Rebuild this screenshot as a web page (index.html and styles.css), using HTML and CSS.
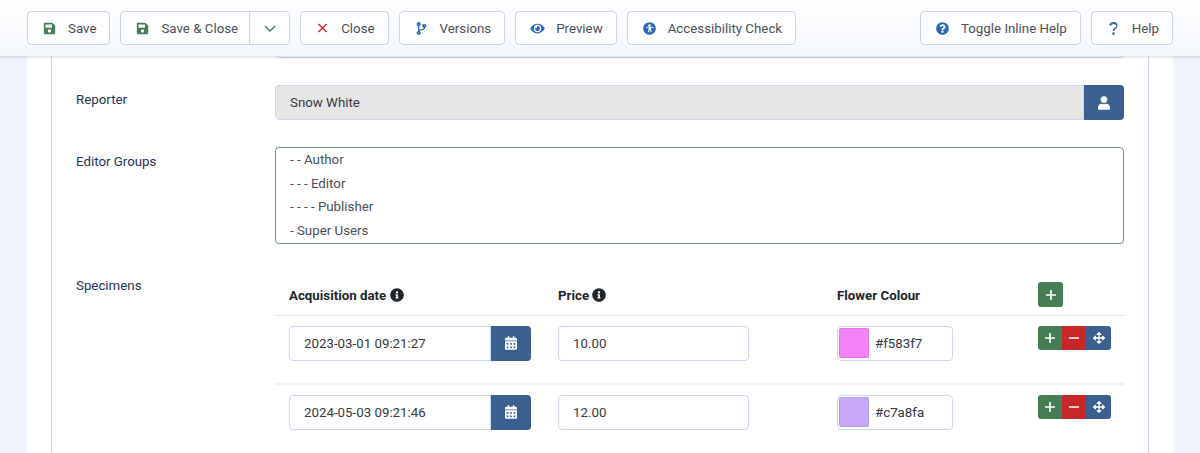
FILE: index.html
```html
<!DOCTYPE html>
<html lang="en">
<head>
    <meta charset="UTF-8" />
    <title>Edit Flower</title>
    <link rel="stylesheet" href="styles.css">
</head>
<body>

    <svg class="icon-defs" aria-hidden="true">
        <symbol id="i-save" viewBox="0 0 448 512"><path d="M433.941 129.941l-83.882-83.882A48 48 0 0 0 316.118 32H48C21.49 32 0 53.49 0 80v352c0 26.51 21.49 48 48 48h352c26.51 0 48-21.49 48-48V163.882a48 48 0 0 0-14.059-33.941zM224 416c-35.346 0-64-28.654-64-64 0-35.346 28.654-64 64-64s64 28.654 64 64c0 35.346-28.654 64-64 64zm96-304.52V212c0 6.627-5.373 12-12 12H76c-6.627 0-12-5.373-12-12V108c0-6.627 5.373-12 12-12h228.52c3.183 0 6.235 1.264 8.485 3.515l3.48 3.48A11.996 11.996 0 0 1 320 111.48z"/></symbol>
        <symbol id="i-user" viewBox="0 0 448 512"><path d="M224 256c70.7 0 128-57.3 128-128S294.7 0 224 0 96 57.3 96 128s57.3 128 128 128zm89.6 32h-16.7c-22.2 10.2-46.9 16-72.9 16s-50.6-5.8-72.9-16h-16.7C60.2 288 0 348.2 0 422.4V464c0 26.5 21.5 48 48 48h352c26.5 0 48-21.5 48-48v-41.6c0-74.2-60.2-134.4-134.4-134.4z"/></symbol>
        <symbol id="i-calendar" viewBox="0 0 448 512"><path d="M0 464c0 26.5 21.5 48 48 48h352c26.5 0 48-21.5 48-48V192H0v272zm320-196c0-6.6 5.4-12 12-12h40c6.6 0 12 5.4 12 12v40c0 6.6-5.4 12-12 12h-40c-6.6 0-12-5.4-12-12v-40zm0 128c0-6.6 5.4-12 12-12h40c6.6 0 12 5.4 12 12v40c0 6.6-5.4 12-12 12h-40c-6.6 0-12-5.4-12-12v-40zM192 268c0-6.6 5.4-12 12-12h40c6.6 0 12 5.4 12 12v40c0 6.6-5.4 12-12 12h-40c-6.6 0-12-5.4-12-12v-40zm0 128c0-6.6 5.4-12 12-12h40c6.6 0 12 5.4 12 12v40c0 6.6-5.4 12-12 12h-40c-6.6 0-12-5.4-12-12v-40zM64 268c0-6.6 5.4-12 12-12h40c6.6 0 12 5.4 12 12v40c0 6.6-5.4 12-12 12H76c-6.6 0-12-5.4-12-12v-40zm0 128c0-6.6 5.4-12 12-12h40c6.6 0 12 5.4 12 12v40c0 6.6-5.4 12-12 12H76c-6.6 0-12-5.4-12-12v-40zM400 64h-48V16c0-8.8-7.2-16-16-16h-32c-8.8 0-16 7.2-16 16v48H160V16c0-8.8-7.2-16-16-16h-32c-8.8 0-16 7.2-16 16v48H48C21.5 64 0 85.5 0 112v48h448v-48c0-26.5-21.5-48-48-48z"/></symbol>
        <symbol id="i-info" viewBox="0 0 512 512"><path d="M256 8C119.043 8 8 119.083 8 256c0 136.997 111.043 248 248 248s248-111.003 248-248C504 119.083 392.957 8 256 8zm0 110c23.196 0 42 18.804 42 42s-18.804 42-42 42-42-18.804-42-42 18.804-42 42-42zm56 254c0 6.627-5.373 12-12 12h-88c-6.627 0-12-5.373-12-12v-24c0-6.627 5.373-12 12-12h12v-64h-12c-6.627 0-12-5.373-12-12v-24c0-6.627 5.373-12 12-12h64c6.627 0 12 5.373 12 12v100h12c6.627 0 12 5.373 12 12v24z"/></symbol>
        <symbol id="i-help-circle" viewBox="0 0 512 512"><path d="M504 256c0 136.997-111.043 248-248 248S8 392.997 8 256C8 119.083 119.043 8 256 8s248 111.083 248 248zM262.655 90c-54.497 0-89.255 22.957-116.549 63.758-3.536 5.286-2.353 12.415 2.715 16.258l34.699 26.31c5.205 3.947 12.621 3.008 16.665-2.122 17.864-22.658 30.113-35.797 57.303-35.797 20.429 0 45.698 13.148 45.698 32.958 0 14.976-12.363 22.667-32.534 33.976C247.128 238.528 216 254.941 216 296v4c0 6.627 5.373 12 12 12h56c6.627 0 12-5.373 12-12v-1.333c0-28.462 83.186-29.647 83.186-106.667 0-58.002-60.165-102-116.531-102zM256 338c-25.365 0-46 20.635-46 46 0 25.364 20.635 46 46 46s46-20.636 46-46c0-25.365-20.635-46-46-46z"/></symbol>
        <symbol id="i-help" viewBox="0 0 384 512"><path d="M202.021 0C122.202 0 70.503 32.703 29.914 91.026c-7.363 10.58-5.093 25.086 5.178 32.874l22 16.7c10.373 7.865 25.132 6.026 33.253-4.148 25.049-31.381 60-62.449 112-62.449 48 0 100 29.8 100 79.6 0 36.5-28 56-68 78.1-35.423 19.86-72 50.5-72 100.3V344c0 8 6 14 14 14h28c8 0 14-6 14-14v-5.773c0-42.86 125.268-64.645 125.268-184.627C377.504 66.256 286.902 0 202.021 0zM192 403c-30 0-52 24-52 54s22 55 52 55 52-25 52-55-22-54-52-54z"/></symbol>
        <symbol id="i-eye" viewBox="0 0 576 512"><path d="M572.52 241.4C518.29 135.59 410.93 64 288 64S57.68 135.64 3.48 241.41a32.35 32.35 0 0 0 0 29.19C57.71 376.41 165.07 448 288 448s230.32-71.64 284.52-177.41a32.35 32.35 0 0 0 0-29.19zM288 400a144 144 0 1 1 144-144 143.93 143.93 0 0 1-144 144zm0-240a95.31 95.31 0 0 0-25.31 3.79 47.85 47.85 0 0 1-66.9 66.9A95.78 95.78 0 1 0 288 160z"/></symbol>
        <symbol id="i-branch" viewBox="0 0 384 512"><path d="M384 144c0-44.2-35.8-80-80-80s-80 35.8-80 80c0 36.4 24.3 67.1 57.5 76.8-.6 16.1-4.2 28.5-11 36.9-15.4 19.2-49.3 22.4-85.2 25.7-28.2 2.6-57.4 5.4-81.3 16.9v-144c32.5-10.2 56-40.5 56-76.3 0-44.2-35.8-80-80-80S0 35.8 0 80c0 35.8 23.5 66.1 56 76.3v199.3C23.5 365.9 0 396.2 0 432c0 44.2 35.8 80 80 80s80-35.8 80-80c0-34-21.2-63.1-51.2-74.6 3.1-5.2 7.8-9.8 14.9-13.4 16.2-8.2 40.4-10.4 66.1-12.8 42.2-3.9 90-8.4 118.2-43.4 14-17.4 21.1-39.8 21.6-67.9 31.6-10.8 54.4-40.7 54.4-75.9zM80 64c8.8 0 16 7.2 16 16s-7.2 16-16 16-16-7.2-16-16 7.2-16 16-16zm0 384c-8.8 0-16-7.2-16-16s7.2-16 16-16 16 7.2 16 16-7.2 16-16 16zm224-320c8.8 0 16 7.2 16 16s-7.2 16-16 16-16-7.2-16-16 7.2-16 16-16z"/></symbol>
        <symbol id="i-access" viewBox="0 0 512 512"><path fill-rule="evenodd" d="M256 8C119 8 8 119 8 256s111 248 248 248 248-111 248-248S393 8 256 8zm0 76a50 50 0 1 1 0 100 50 50 0 0 1 0-100zm146 118c9 2 15 12 13 21s-12 15-21 13c-30-7-62-13-86-15 2 80 10 100 32 156 4 10-1 21-11 25s-21-1-25-11l-26-62c-7-13-17-13-24 0l-26 62c-4 10-15 15-25 11s-15-15-11-25c22-56 30-76 32-156-24 2-56 8-86 15-9 2-19-4-21-13s4-19 13-21c50-12 98-20 146-20s96 8 146 20z"/></symbol>
        <symbol id="i-arrows" viewBox="0 0 512 512"><path d="M352.201 425.775l-79.196 79.196c-9.373 9.373-24.568 9.373-33.941 0l-79.196-79.196c-15.119-15.119-4.411-40.971 16.971-40.97h51.162L228 284H127.196v51.162c0 21.382-25.851 32.09-40.971 16.971L7.029 272.937c-9.373-9.373-9.373-24.569 0-33.941L86.225 159.8c15.119-15.119 40.971-4.411 40.971 16.971V228H228V127.196h-51.23c-21.382 0-32.09-25.851-16.971-40.971l79.196-79.196c9.373-9.373 24.568-9.373 33.941 0l79.196 79.196c15.119 15.119 4.411 40.971-16.971 40.971h-51.162V228h100.804v-51.162c0-21.382 25.851-32.09 40.97-16.971l79.196 79.196c9.373 9.373 9.373 24.569 0 33.941L425.773 352.2c-15.119 15.119-40.971 4.411-40.97-16.971V284H284v100.804h51.23c21.382 0 32.09 25.851 16.971 40.971z"/></symbol>
        <symbol id="i-plus" viewBox="0 0 12 12"><path d="M5 0h2v5h5v2H7v5H5V7H0V5h5z"/></symbol>
        <symbol id="i-minus" viewBox="0 0 12 12"><path d="M0 5h12v2H0z"/></symbol>
    </svg>

    <header class="toolbar">
        <button type="button" class="tb-btn"><svg class="tb-icon green"><use href="#i-save"/></svg>Save</button>
        <div class="tb-split">
            <button type="button" class="tb-btn split-main"><svg class="tb-icon green"><use href="#i-save"/></svg>Save &amp; Close</button>
            <button type="button" class="tb-btn split-caret">
                <svg class="caret" viewBox="0 0 14 8"><path d="M1 1l6 6 6-6"/></svg>
            </button>
        </div>
        <button type="button" class="tb-btn">
            <svg class="x-mark" viewBox="0 0 10 10"><path d="M1 1l8 8M9 1l-8 8"/></svg>Close
        </button>
        <button type="button" class="tb-btn"><svg class="tb-icon blue"><use href="#i-branch"/></svg>Versions</button>
        <button type="button" class="tb-btn"><svg class="tb-icon blue"><use href="#i-eye"/></svg>Preview</button>
        <button type="button" class="tb-btn"><svg class="tb-icon blue"><use href="#i-access"/></svg>Accessibility Check</button>
        <div class="tb-right">
            <button type="button" class="tb-btn"><svg class="tb-icon blue"><use href="#i-help-circle"/></svg>Toggle Inline Help</button>
            <button type="button" class="tb-btn"><svg class="tb-icon blue"><use href="#i-help"/></svg>Help</button>
        </div>
    </header>

    <main class="page">
        <div class="card">
            <fieldset class="group">
                <div class="prev-field-row"><div class="prev-field"></div></div>

                <div class="form-row">
                    <label class="form-label">Reporter</label>
                    <div class="input-join">
                        <div class="field field-readonly">Snow White</div>
                        <button type="button" class="addon"><svg class="addon-icon"><use href="#i-user"/></svg></button>
                    </div>
                </div>

                <div class="form-row">
                    <label class="form-label">Editor Groups</label>
                    <div class="listbox">
                        <div>- - Author</div>
                        <div>- - - Editor</div>
                        <div>- - - - Publisher</div>
                        <div>- Super Users</div>
                    </div>
                </div>

                <div class="form-row">
                    <label class="form-label">Specimens</label>
                    <table class="specimens">
                        <thead>
                            <tr>
                                <th class="col-date">Acquisition date <svg class="info"><use href="#i-info"/></svg></th>
                                <th class="col-price">Price <svg class="info"><use href="#i-info"/></svg></th>
                                <th class="col-colour">Flower Colour</th>
                                <th class="col-actions">
                                    <button type="button" class="act act-add act-single"><svg class="act-icon"><use href="#i-plus"/></svg></button>
                                </th>
                            </tr>
                        </thead>
                        <tbody>
                            <tr>
                                <td>
                                    <div class="input-join date-input">
                                        <div class="field">2023-03-01 09:21:27</div>
                                        <button type="button" class="addon"><svg class="addon-icon"><use href="#i-calendar"/></svg></button>
                                    </div>
                                </td>
                                <td><div class="field price-input">10.00</div></td>
                                <td>
                                    <div class="field colour-input">
                                        <span class="swatch swatch-pink"></span>#f583f7
                                    </div>
                                </td>
                                <td>
                                    <div class="act-group">
                                        <button type="button" class="act act-add"><svg class="act-icon"><use href="#i-plus"/></svg></button>
                                        <button type="button" class="act act-remove"><svg class="act-icon"><use href="#i-minus"/></svg></button>
                                        <button type="button" class="act act-move"><svg class="act-icon act-icon-move"><use href="#i-arrows"/></svg></button>
                                    </div>
                                </td>
                            </tr>
                            <tr>
                                <td>
                                    <div class="input-join date-input">
                                        <div class="field">2024-05-03 09:21:46</div>
                                        <button type="button" class="addon"><svg class="addon-icon"><use href="#i-calendar"/></svg></button>
                                    </div>
                                </td>
                                <td><div class="field price-input">12.00</div></td>
                                <td>
                                    <div class="field colour-input">
                                        <span class="swatch swatch-lilac"></span>#c7a8fa
                                    </div>
                                </td>
                                <td>
                                    <div class="act-group">
                                        <button type="button" class="act act-add"><svg class="act-icon"><use href="#i-plus"/></svg></button>
                                        <button type="button" class="act act-remove"><svg class="act-icon"><use href="#i-minus"/></svg></button>
                                        <button type="button" class="act act-move"><svg class="act-icon act-icon-move"><use href="#i-arrows"/></svg></button>
                                    </div>
                                </td>
                            </tr>
                        </tbody>
                    </table>
                </div>
            </fieldset>
        </div>
    </main>

</body>
</html>
```

FILE: styles.css
```css
* {
    box-sizing: border-box;
}
html, body {
    height: 453px;
    overflow: hidden;
}
body {
    margin: 0;
    font-family: Roboto, 'Liberation Sans', sans-serif;
    font-size: 13.3px;
    color: #495057;
    background-color: #eff4fc;
}
button {
    font-family: inherit;
    font-size: 13.3px;
    cursor: pointer;
}
.icon-defs {
    display: none;
}

/* toolbar */
.toolbar {
    display: flex;
    align-items: center;
    gap: 10px;
    height: 56px;
    padding: 0 27px;
    background: linear-gradient(to bottom, #ffffff, #f3f6fb);
    box-shadow: 0 1px 3px rgba(30, 50, 90, 0.2);
    position: relative;
    z-index: 10;
}
.tb-btn {
    display: flex;
    align-items: center;
    height: 34px;
    padding: 0 13px;
    white-space: nowrap;
    background-color: #fff;
    color: #495057;
    border: 1px solid #ccd6e6;
    border-radius: 4px;
}
.tb-icon {
    width: 17px;
    height: 13px;
    margin-right: 10px;
    fill: currentColor;
}
.green {
    color: #457d54;
}
.blue {
    color: #2a69b8;
}
.tb-split {
    display: flex;
}
.split-main {
    padding-right: 11px;
    border-radius: 4px 0 0 4px;
}
.split-caret {
    width: 41px;
    justify-content: center;
    padding: 0;
    margin-left: -1px;
    border-radius: 0 4px 4px 0;
}
.caret {
    width: 12px;
    height: 7px;
    fill: none;
    stroke: #457d54;
    stroke-width: 1.6;
}
.x-mark {
    width: 17px;
    height: 10px;
    margin-right: 10px;
    fill: none;
    stroke: #c52827;
    stroke-width: 1.5;
}
.tb-right {
    display: flex;
    gap: 10px;
    margin-left: auto;
}

/* form */
.page {
    padding: 0 27px;
    margin-top: -8px;
}
.card {
    background-color: #fff;
    padding: 0 24px;
    height: 420px;
}
.group {
    margin: 0;
    padding: 0 24px 0 23px;
    height: 100%;
    border: 0;
    border-left: 1px solid #ccd6e6;
    border-right: 1px solid #ccd6e6;
}
.prev-field-row {
    height: 10px;
    margin-bottom: 27px;
    padding-left: 200px;
}
.prev-field {
    height: 10px;
    border: 1px solid #ccd6e6;
    border-radius: 0 0 4px 4px;
}
.form-row {
    display: grid;
    grid-template-columns: 200px 1fr;
    margin-bottom: 27px;
}
.form-label {
    padding: 7px 0 0 1px;
    color: #22335c;
    line-height: 16px;
}
.input-join {
    display: flex;
    height: 35px;
}
.field {
    flex: 1;
    height: 35px;
    padding: 0 14px;
    line-height: 33px;
    color: #343a40;
    background-color: #fff;
    border: 1px solid #ccd8ea;
    border-radius: 4px;
}
.input-join .field {
    border-radius: 4px 0 0 4px;
}
.field-readonly {
    background-color: #e6e6e6;
}
.addon {
    display: flex;
    align-items: center;
    justify-content: center;
    width: 40px;
    height: 35px;
    padding: 0;
    border: 0;
    border-radius: 0 4px 4px 0;
    background-color: #3b608f;
}
.addon-icon {
    width: 12px;
    height: 14px;
    fill: #fff;
}
.listbox {
    height: 97px;
    padding: 0 14px;
    overflow: hidden;
    border: 1px solid #6f8f78;
    border-radius: 4px;
    color: #495057;
    line-height: 23.7px;
}

/* subform table */
.specimens {
    width: 849px;
    border-collapse: collapse;
    table-layout: fixed;
    margin-top: -1px;
}
.specimens th {
    height: 45px;
    padding: 6px 14px 0;
    text-align: left;
    font-weight: 700;
    color: #22262a;
    border-bottom: 1px solid #e4e8ee;
}
.specimens td {
    padding: 10px 14px 22px;
    vertical-align: top;
    border-bottom: 2px solid #eef0f4;
}
.specimens tbody tr:last-child td {
    border-bottom: 0;
}
.col-date {
    width: 269px;
}
.col-price {
    width: 279px;
}
.col-colour {
    width: 215px;
}
.specimens .col-actions {
    padding: 12px 0 0;
    vertical-align: top;
}
.specimens td:last-child {
    padding: 10px 0 0;
}
.info {
    width: 14px;
    height: 14px;
    vertical-align: -2px;
    fill: #22262a;
}
.date-input {
    width: 242px;
}
.price-input {
    width: 191px;
}
.colour-input {
    display: flex;
    align-items: center;
    width: 116px;
    padding: 0 0 0 1px;
}
.swatch {
    width: 30px;
    height: 30px;
    margin-right: 6px;
    border-radius: 2px;
    border: 1px solid rgba(0, 0, 0, 0.08);
}
.swatch-pink {
    background-color: #f583f7;
}
.swatch-lilac {
    background-color: #c7a8fa;
}
.act-group {
    display: flex;
    width: 73px;
    border-radius: 3px;
    overflow: hidden;
}
.act {
    display: flex;
    align-items: center;
    justify-content: center;
    width: 24px;
    height: 24px;
    padding: 0;
    border: 0;
}
.act-single {
    border-radius: 3px;
    width: 25px;
    height: 25px;
}
.act-add {
    background-color: #457d54;
}
.act-remove {
    background-color: #c52827;
}
.act-move {
    width: 25px;
    background-color: #3b608f;
}
.act-icon {
    width: 10px;
    height: 10px;
    fill: #fff;
}
.act-icon-move {
    width: 12px;
    height: 12px;
}
```
